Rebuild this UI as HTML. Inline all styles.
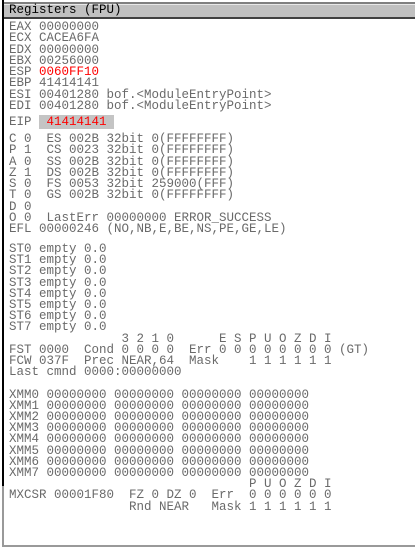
<!DOCTYPE html>
<html><head><style>
body{margin:0;width:415px;height:549px;background:#fff;position:relative;overflow:hidden;font-family:"Liberation Mono",monospace;}
.hd{position:absolute;left:4px;top:2px;width:411px;height:13px;background:#c0c0c0;border-top:2px solid #808080;border-bottom:2px solid #404040;box-shadow:inset 0 1px 0 #e8e8e8;}
.hd span{position:absolute;left:5px;top:0px;font-size:12.5px;line-height:13px;color:#000;}
.lb{position:absolute;left:2px;top:0;width:2px;height:486px;background:#000;}
.lb2{position:absolute;left:2px;top:486px;width:2px;height:60px;background:#999;}
.bb{position:absolute;left:2px;top:545px;width:413px;height:2px;background:#999;}
pre{position:absolute;left:9px;margin:0;font-family:inherit;font-size:12.5px;line-height:11.3px;color:#6a6a6a;white-space:pre;}
.r{color:#f00}
.eip{background:#c4c4c4;}
</style></head><body>
<div class="lb"></div><div class="lb2"></div><div class="bb"></div>
<div class="hd"><span>Registers (FPU)</span></div>
<pre style="top:22px">EAX 00000000
ECX CACEA6FA
EDX 00000000
EBX 00256000
ESP <span class="r">0060FF10</span>
EBP 41414141
ESI 00401280 bof.&lt;ModuleEntryPoint&gt;
EDI 00401280 bof.&lt;ModuleEntryPoint&gt;</pre>
<pre style="top:116px;line-height:13px">EIP <span class="eip r">&nbsp;41414141&nbsp;</span></pre>
<pre style="top:134px">C 0  ES 002B 32bit 0(FFFFFFFF)
P 1  CS 0023 32bit 0(FFFFFFFF)
A 0  SS 002B 32bit 0(FFFFFFFF)
Z 1  DS 002B 32bit 0(FFFFFFFF)
S 0  FS 0053 32bit 259000(FFF)
T 0  GS 002B 32bit 0(FFFFFFFF)
D 0
O 0  LastErr 00000000 ERROR_SUCCESS</pre>
<pre style="top:224px">EFL 00000246 (NO,NB,E,BE,NS,PE,GE,LE)</pre>
<pre style="top:244px;line-height:11.2px">ST0 empty 0.0
ST1 empty 0.0
ST2 empty 0.0
ST3 empty 0.0
ST4 empty 0.0
ST5 empty 0.0
ST6 empty 0.0
ST7 empty 0.0
               3 2 1 0      E S P U O Z D I
FST 0000  Cond 0 0 0 0  Err 0 0 0 0 0 0 0 0 (GT)
FCW 037F  Prec NEAR,64  Mask    1 1 1 1 1 1
Last cmnd 0000:00000000

XMM0 00000000 00000000 00000000 00000000
XMM1 00000000 00000000 00000000 00000000
XMM2 00000000 00000000 00000000 00000000
XMM3 00000000 00000000 00000000 00000000
XMM4 00000000 00000000 00000000 00000000
XMM5 00000000 00000000 00000000 00000000
XMM6 00000000 00000000 00000000 00000000
XMM7 00000000 00000000 00000000 00000000
                                P U O Z D I
MXCSR 00001F80  FZ 0 DZ 0  Err  0 0 0 0 0 0
                Rnd NEAR   Mask 1 1 1 1 1 1</pre>
</body></html>
